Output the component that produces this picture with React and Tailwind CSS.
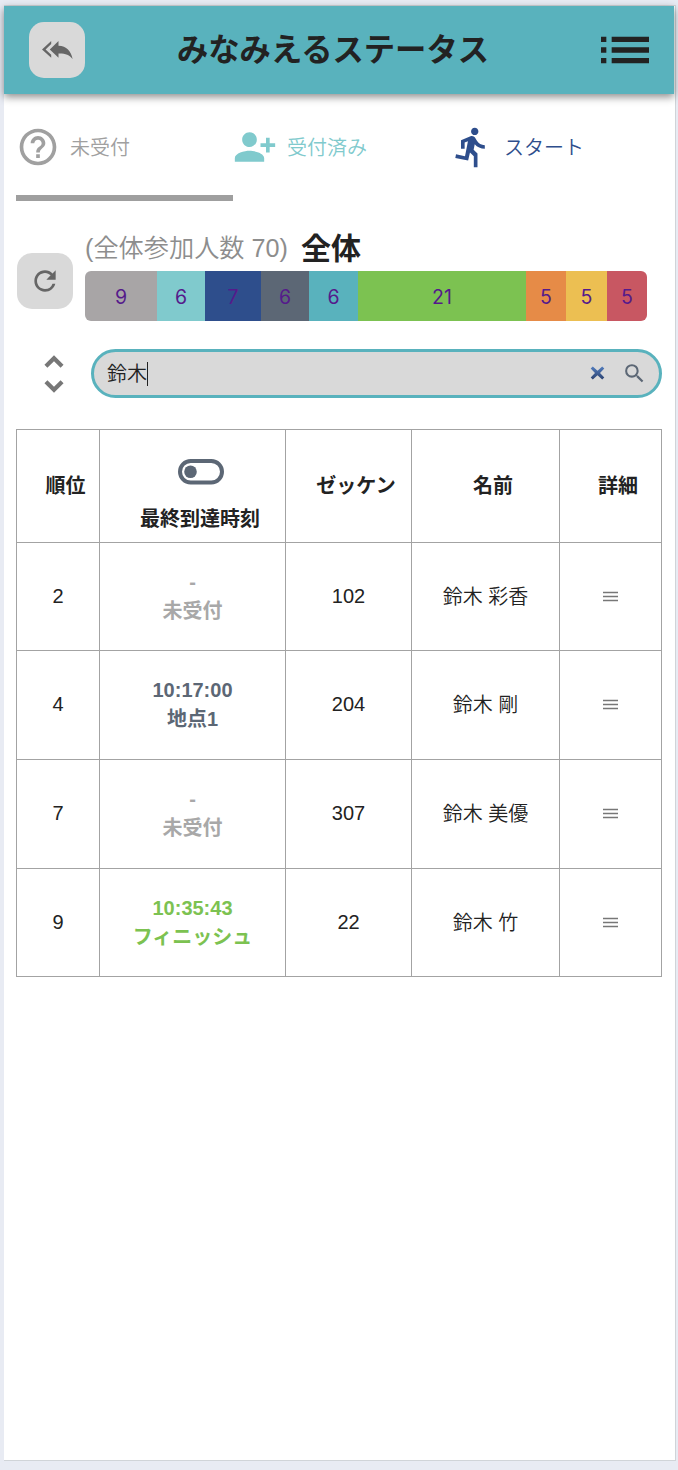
import React from 'react';
import {
  MdHelpOutline,
  MdPersonAddAlt1,
  MdDirectionsRun,
  MdRefresh,
  MdSearch,
  MdList,
  MdUnfoldMore,
} from 'react-icons/md';

const segments = [
  { n: 9, cls: 'w-[72px] bg-[#a8a5a6]' },
  { n: 6, cls: 'w-12 bg-[#80cacd]' },
  { n: 7, cls: 'w-14 bg-[#2e4e8c]' },
  { n: 6, cls: 'w-12 bg-[#5c6775]' },
  { n: 6, cls: 'w-[49px] bg-[#59b2bd]' },
  { n: 21, cls: 'w-[168px] bg-[#7cc251]' },
  { n: 5, cls: 'w-10 bg-[#e68b47]' },
  { n: 5, cls: 'w-[41px] bg-[#ecbf52]' },
  { n: 5, cls: 'w-10 bg-[#c85762]' },
];

const rows = [
  { rank: 2, time: '-', status: '未受付', bib: 102, name: '鈴木 彩香', color: 'text-[#a8a8a8]', height: 'h-[108px]' },
  { rank: 4, time: '10:17:00', status: '地点1', bib: 204, name: '鈴木 剛', color: 'text-[#5c6775]', height: 'h-[109px]' },
  { rank: 7, time: '-', status: '未受付', bib: 307, name: '鈴木 美優', color: 'text-[#a8a8a8]', height: 'h-[109px]' },
  { rank: 9, time: '10:35:43', status: 'フィニッシュ', bib: 22, name: '鈴木 竹', color: 'text-[#7cc251]', height: 'h-[108px]' },
];

function ReplyAll() {
  return (
    <svg width="32" height="20" viewBox="0 0 32 20" fill="#666">
      <path d="M10.2 1v3L4.600 9.400l5.600 5.400v3L1 9.400z" />
      <path d="M17.500 1v4.800C25.500 6 30.200 11.500 31.600 19 28.500 14.600 24 13.200 17.500 13.400v4.400L8.800 9.400z" />
    </svg>
  );
}

function Header() {
  return (
    <header className="flex h-[88px] w-[670px] shrink-0 items-center justify-between bg-[#59b2bd] pl-[25px] pr-[17px] shadow-[0_3px_8px_rgba(0,0,0,0.45)]">
      <button className="flex size-14 items-center justify-center rounded-[15px] bg-[#d9d9d9]">
        <ReplyAll />
      </button>
      <h1 className="mr-[12px] pt-[2px] text-[31.3px] font-bold leading-none">みなみえるステータス</h1>
      <MdList size={64} />
    </header>
  );
}

function Tabs() {
  return (
    <nav className="ml-3 mt-[28px] flex h-[78px] items-start text-[20px] font-[350]">
      <div className="flex h-[79px] w-[217px] items-start border-b-[6px] border-[#9f9f9f] text-[#a0a0a0]">
        <div className="flex h-[50px] items-center gap-[10px]">
          <MdHelpOutline size={44} />
          <span className="pt-[2px]">未受付</span>
        </div>
      </div>
      <div className="flex h-[50px] w-[217px] items-center gap-[10px] text-[#80cacd]">
        <MdPersonAddAlt1 size={44} />
        <span className="pt-[2px]">受付済み</span>
      </div>
      <div className="flex h-[50px] items-center gap-[10px] text-[#2e4e8c]">
        <MdDirectionsRun size={44} />
        <span className="pt-[2px]">スタート</span>
      </div>
    </nav>
  );
}

function Summary() {
  return (
    <section className="mt-[33px] flex h-[88px] pl-[13px]">
      <button className="mt-[20px] flex size-14 shrink-0 items-center justify-center rounded-[15px] bg-[#d9d9d9] text-[#666]">
        <MdRefresh size={32} />
      </button>
      <div className="ml-3">
        <div className="flex h-[38px] items-center whitespace-nowrap pb-[7px] leading-none">
          <span className="text-[25.2px] font-[350] text-[#8d8d8d]">(全体参加人数 70)</span>
          <span className="ml-[13px] text-[30px] font-bold">全体</span>
        </div>
        <div className="flex h-[50px] w-[562px] overflow-hidden rounded-[6px]">
          {segments.map((s, i) => (
            <div
              key={i}
              className={`flex shrink-0 items-center justify-center pt-[4px] font-['Inter',sans-serif] text-[19.5px] text-[#551a8b] ${s.cls}`}
            >
              {s.n}
            </div>
          ))}
        </div>
      </div>
    </section>
  );
}

function Search() {
  return (
    <section className="mt-[28px] flex h-[49px] items-center pl-[25px]">
      <MdUnfoldMore size={50} className="shrink-0 text-[#777]" />
      <div className="ml-[12px] flex h-[49px] w-[571px] items-center rounded-full border-[3px] border-[#59b2bd] bg-[#d9d9d9] pl-[13px] pr-[12px]">
        <span className="text-[20px] font-[350] leading-none">鈴木</span>
        <span className="h-6 w-px bg-[#222]" />
        <svg className="ml-auto" width="15" height="15" viewBox="0 0 15 15">
          <defs>
            <linearGradient id="clear" x1="0" y1="0" x2="0" y2="1">
              <stop offset="0" stopColor="#527dbe" />
              <stop offset="1" stopColor="#2c4270" />
            </linearGradient>
          </defs>
          <path
            fill="url(#clear)"
            d="M2.800.5 7.500 4.800 12.200.5 14.300 2.600 10 7l4.300 4.400-2.100 2.100-4.700-4.300-4.700 4.300L.7 11.400 5 7 .7 2.600z"
          />
        </svg>
        <MdSearch size={25} className="ml-[17px] text-[#5c6775]" />
      </div>
    </section>
  );
}

function Menu() {
  return (
    <svg className="mx-auto" width="15" height="12" viewBox="0 0 15 12" stroke="#777" strokeWidth="1.400">
      <path d="M0 1.500h15M0 5.500h15M0 9.500h15" />
    </svg>
  );
}

function Results() {
  const cell = 'border border-[#a3a3a3] p-0 text-center align-middle';
  return (
    <table className="ml-[12px] mt-[31px] w-[646px] table-fixed border-collapse text-[20px] leading-[28px]">
      <colgroup>
        <col className="w-[83px]" />
        <col className="w-[186px]" />
        <col className="w-[126px]" />
        <col className="w-[148px]" />
        <col className="w-[102px]" />
      </colgroup>
      <thead>
        <tr className="h-[113px]">
          <th className={cell}><span className="ml-[15px]">順位</span></th>
          <th className={cell}>
            <div className="flex flex-col items-center pt-[20px]">
              <svg className="ml-[16px]" width="46" height="26" viewBox="0 0 46 26">
                <rect x="2" y="2" width="42" height="21.500" rx="10.700" fill="none" stroke="#5c6775" strokeWidth="4" />
                <circle cx="12.500" cy="12.700" r="6.300" fill="#5c6775" />
              </svg>
              <span className="ml-[15px] mt-[20px]">最終到達時刻</span>
            </div>
          </th>
          <th className={cell}><span className="ml-[15px]">ゼッケン</span></th>
          <th className={cell}><span className="ml-[15px]">名前</span></th>
          <th className={cell}><span className="ml-[15px]">詳細</span></th>
        </tr>
      </thead>
      <tbody>
        {rows.map((r) => (
          <tr key={r.rank} className={r.height}>
            <td className={cell}><div className="pb-[2px]">{r.rank}</div></td>
            <td className={cell}>
              <div className={`font-bold ${r.color}`}>
                <div className="-mt-px pb-px">{r.time}</div>
                <div>{r.status}</div>
              </div>
            </td>
            <td className={cell}><div className="pb-[2px]">{r.bib}</div></td>
            <td className={cell}><span className="font-[350]">{r.name}</span></td>
            <td className={cell}><Menu /></td>
          </tr>
        ))}
      </tbody>
    </table>
  );
}

export default function App() {
  return (
    <div className="h-[1470px] w-[678px] bg-[#e8ebf3] pl-1 pt-[5px] font-['Liberation_Sans','Noto_Sans_CJK_JP',sans-serif] text-[#222]">
      <main className="flex h-[1456px] w-[672px] flex-col border-b border-r border-t border-[#d0d4d8] bg-white">
        <Header />
        <Tabs />
        <Summary />
        <Search />
        <Results />
      </main>
    </div>
  );
}
